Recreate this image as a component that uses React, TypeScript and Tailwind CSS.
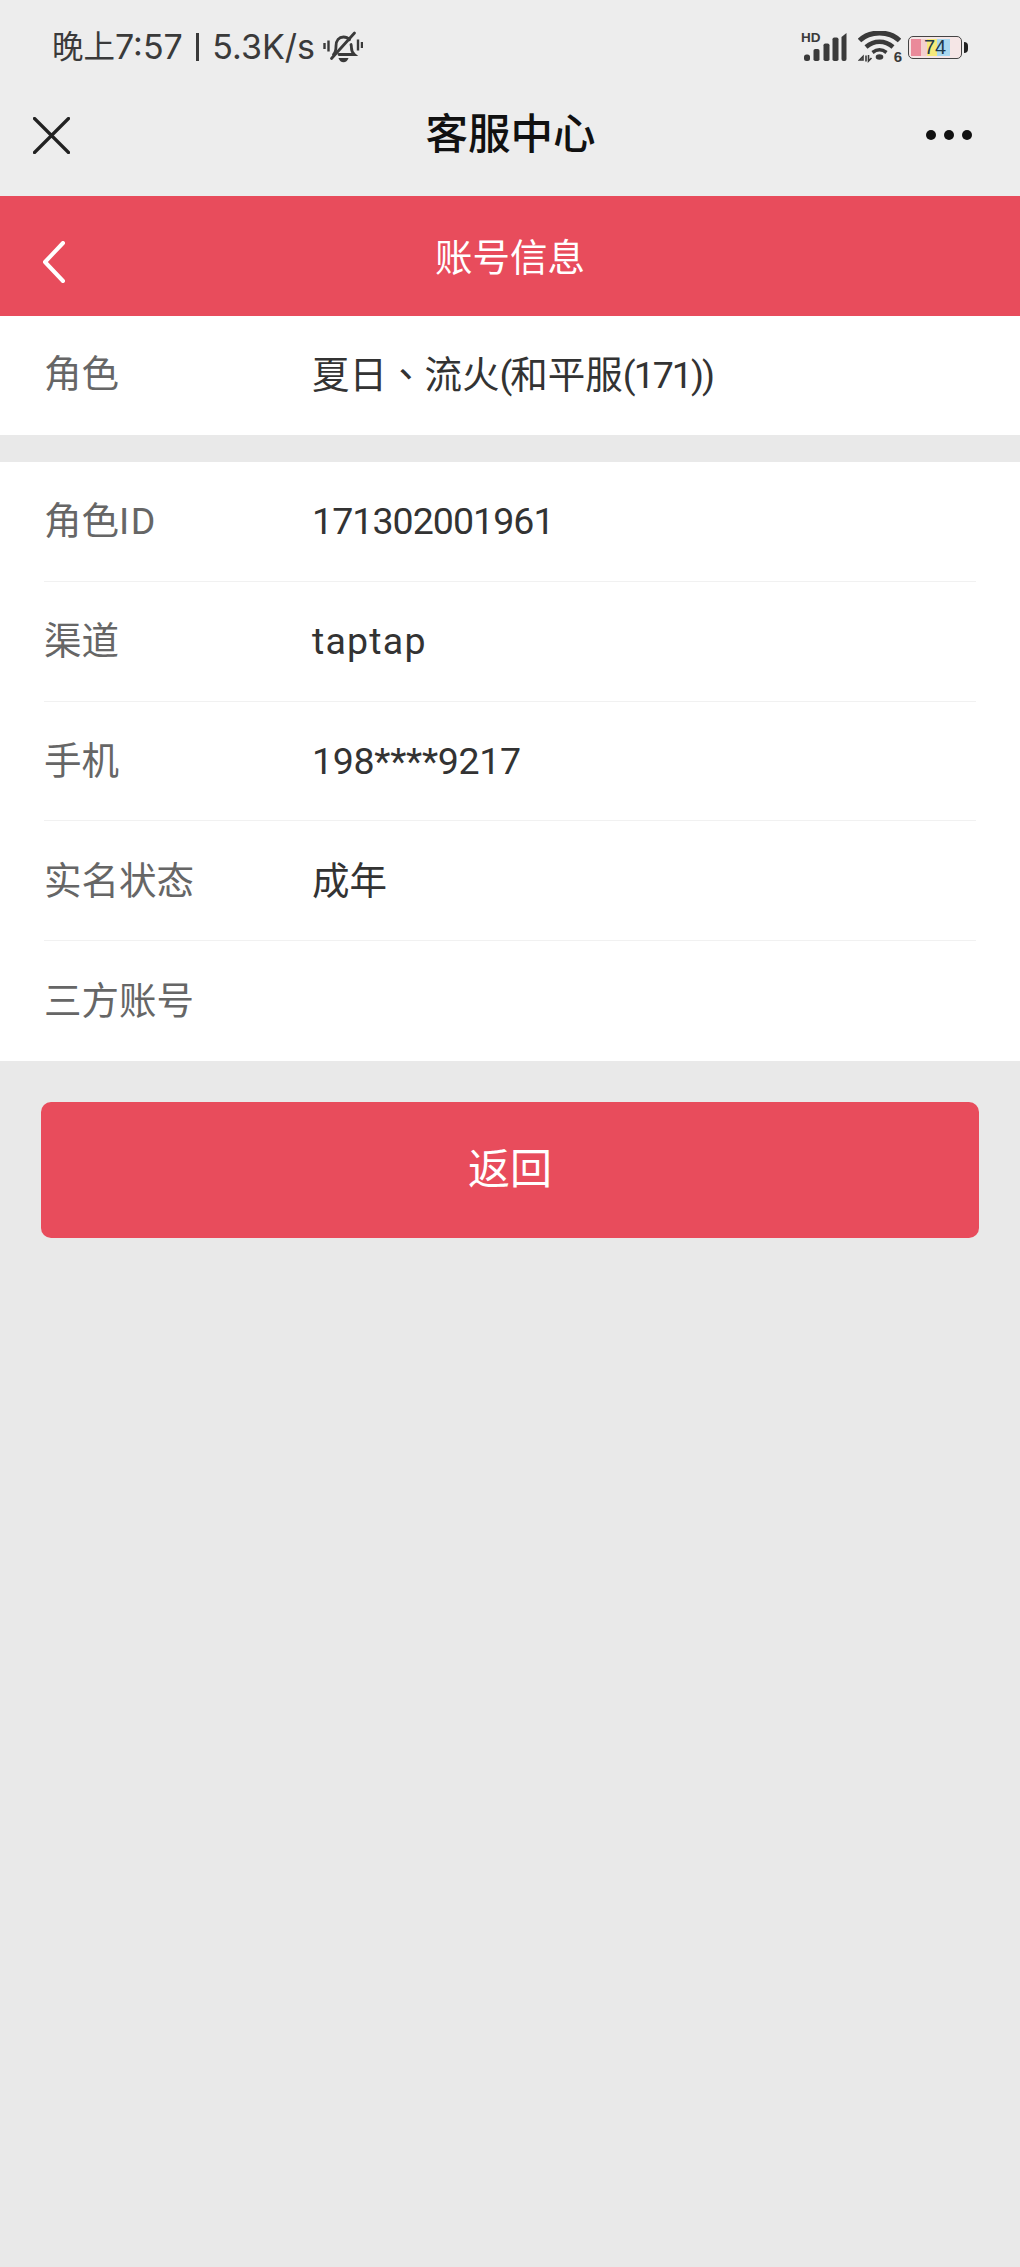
const CJK = "font-['Roboto','Noto_Sans_CJK_SC',sans-serif]";

function BellOff() {
  return (
    <svg width="40" height="32" viewBox="0 0 40 32" fill="none" stroke="#3a3a3a" strokeWidth="2.800" className="ml-[8px]">
      <path d="M10.500 23.500c2-2 2.500-4 2.500-8.500 0-5.500 3-9 7.500-9 2.500 0 4.500 1 6 2.700" strokeLinecap="round" />
      <path d="M28 13.500c.3 1 .4 1.800.4 2.800 0 3.500 1 5.500 3 7.200H16" strokeLinecap="round" />
      <path d="M8.500 27.500 31.500 2" strokeLinecap="round" />
      <path d="M15.500 27h10c-.8 2.800-2.800 4.200-5 4.200s-4.200-1.400-5-4.200z" fill="#3a3a3a" stroke="none" />
      <path d="M5.500 9.500v11M1.500 12v6M35 8.500v11M39 11v6" strokeWidth="2.400" />
    </svg>
  );
}

function Signal() {
  return (
    <div className="relative h-[30px] w-[46px]">
      <span className="absolute left-0 top-0 font-['Liberation_Sans',sans-serif] text-[13.500px] font-bold leading-[12px] text-[#3a3a3a]">HD</span>
      <svg width="46" height="30" viewBox="0 0 46 30" className="block">
        <rect x="3" y="22.500" width="6" height="6.500" rx="2.500" fill="#3a3a3a" />
        <rect x="12.500" y="17" width="6" height="12" rx="1.800" fill="#3a3a3a" />
        <rect x="22.500" y="11.500" width="6" height="17.500" rx="1.800" fill="#3a3a3a" />
        <rect x="31.500" y="5.500" width="6" height="23.500" rx="1.800" fill="#3a3a3a" />
        <path d="M40.500 5 45.500 1v26a2 2 0 0 1-2 2h-1a2 2 0 0 1-2-2z" fill="#3a3a3a" />
      </svg>
    </div>
  );
}

function Wifi() {
  return (
    <div className="relative h-[32px] w-[43px]">
      <svg width="43" height="32" viewBox="0 0 43 32" fill="none" className="block">
        <path d="M1.500 9.500C12-.5 31-.5 41.500 9.500" stroke="#3a3a3a" strokeWidth="5" />
        <path d="M8 16C16 9 27 9 35 16" stroke="#3a3a3a" strokeWidth="4.500" />
        <path d="M14.500 21.500c4.500-3.500 9.500-3.500 14 0" stroke="#3a3a3a" strokeWidth="3.500" />
        <ellipse cx="21.500" cy="26" rx="3.800" ry="2.800" fill="#3a3a3a" />
        <path d="M1.500 29 5 25.500V29zM8 24.500v6M10.500 24v6l3-3" stroke="#3a3a3a" strokeWidth="1.600" />
      </svg>
      <span className="absolute right-[-1px] top-[19px] font-['Liberation_Sans',sans-serif] text-[15px] font-bold leading-[14px] text-[#3a3a3a]">6</span>
    </div>
  );
}

function Battery() {
  return (
    <div className="flex items-center">
      <div className="relative flex h-[23px] w-[54px] overflow-hidden rounded-[5px] border-[1.500px] border-[#444444] bg-[#f5e6e6]">
        <div className="ml-[2px] my-[2px] w-[10px] bg-[#ea8a9a]" />
        <div className="my-[2px] w-[6px] bg-[#f3d0cf]" />
        <div className="my-[2px] w-[10px] bg-[#f5e97a]" />
        <div className="my-[2px] w-[13px] bg-[#a8d8f0]" />
        <span className="absolute inset-0 flex items-center justify-center font-['Liberation_Sans',sans-serif] text-[20px] leading-none text-[#1e3a4a]">74</span>
      </div>
      <div className="ml-[2px] h-[11px] w-[4px] rounded-r-full bg-[#222222]" />
    </div>
  );
}

function Row({ label, labelTail, value, border = true, valueClass = "" }: { label: string; labelTail?: string; value?: string; border?: boolean; valueClass?: string }) {
  return (
    <div className={`mx-[44px] flex h-[119.800px] items-center ${border ? "border-b border-[#f1f1f1]" : ""}`}>
      <div className="w-[268px] shrink-0 text-[#666666]">
        {label}
        {labelTail ? <span className="tracking-[1.500px]">{labelTail}</span> : null}
      </div>
      <div className={`text-[#333333] ${valueClass}`}>{value}</div>
    </div>
  );
}

export default function App() {
  return (
    <div className={`${CJK} flex min-h-[2267px] w-[1020px] flex-col bg-[#e9e9e9] text-[37.500px] leading-[50px]`}>
      <div className="h-[196px] bg-[#ededed]">
        <div className="flex h-[94px] items-center justify-between pl-[52px] pr-[52px]">
          <div className="flex items-center font-['Inter','Noto_Sans_CJK_SC',sans-serif] text-[34px] leading-[40px] text-[#3a3a3a]">
            <span className="text-[31.500px]">晚上</span>
            <span>7:57</span>
            <div className="ml-[13px] mr-[13px] h-[28px] w-[3.500px] bg-[#3a3a3a]" />
            <span>5.3K/s</span>
            <BellOff />
          </div>
          <div className="flex items-center">
            <Signal />
            <div className="ml-[11px]">
              <Wifi />
            </div>
            <div className="ml-[7px]">
              <Battery />
            </div>
          </div>
        </div>
        <div className="grid h-[82px] grid-cols-[1fr_auto_1fr] items-center pl-[33px] pr-[48px]">
          <svg width="37" height="37" viewBox="0 0 37 37" stroke="#222222" strokeWidth="3.200" strokeLinecap="round">
            <path d="M1.500 1.500 35.500 35.500M35.500 1.500 1.500 35.500" />
          </svg>
          <div className="relative left-[8px] text-[42.500px] font-medium leading-[56px] text-[#111111]">客服中心</div>
          <div className="flex justify-end gap-[8px]">
            <div className="h-[10px] w-[10px] rounded-full bg-[#111111]" />
            <div className="h-[10px] w-[10px] rounded-full bg-[#111111]" />
            <div className="h-[10px] w-[10px] rounded-full bg-[#111111]" />
          </div>
        </div>
      </div>

      <div className="relative flex h-[120px] items-center justify-center bg-[#e84c5c] pt-[4px]">
        <svg width="24" height="42" viewBox="0 0 24 42" fill="none" stroke="#ffffff" strokeWidth="4" strokeLinecap="round" strokeLinejoin="round" className="absolute left-[42px] top-[45px]">
          <path d="M21 2 3 21l18 19" />
        </svg>
        <div className="text-white">账号信息</div>
      </div>

      <div className="flex h-[119px] items-center bg-white px-[44px] pb-[3px]">
        <div className="w-[268px] shrink-0 text-[#666666]">角色</div>
        <div className="mb-[2px] text-[#333333]">
          夏日<span className="font-['Noto_Sans_CJK_TC',sans-serif]">、</span>流火<span className="tracking-[-2px]">(</span>和平服<span className="tracking-[-2px]">(171))</span>
        </div>
      </div>

      <div className="mt-[27px] bg-white">
        <Row label="角色" labelTail="ID" value="171302001961" valueClass="tracking-[-0.950px]" />
        <Row label="渠道" value="taptap" valueClass="tracking-[1.200px]" />
        <Row label="手机" value="198****9217" valueClass="tracking-[-0.300px]" />
        <Row label="实名状态" value="成年" />
        <Row label="三方账号" border={false} />
      </div>

      <div className="mx-[41px] mt-[41px] flex h-[136px] items-center justify-center rounded-[10px] bg-[#e84c5c] text-[42px] text-white">
        返回
      </div>
    </div>
  );
}
